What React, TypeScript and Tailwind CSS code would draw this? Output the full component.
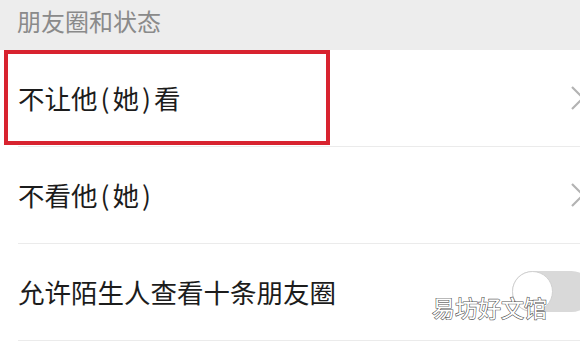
const font = "font-['Noto_Sans_CJK_SC','Noto_Sans',sans-serif]";

function Chevron() {
  return (
    <svg width="8" height="24" viewBox="0 0 8 24" className="shrink-0 overflow-visible">
      <path d="M0 1 L11 12 L0 23" fill="none" stroke="#b3b3b3" strokeWidth="2.2" />
    </svg>
  );
}

// 括号略宽一些，贴近原图字体
function Label({ text }: { text: string }) {
  const parts = text.split(/([()])/);
  return (
    <span className="text-[26.5px] text-[#1c1c1c] leading-none">
      {parts.map((p, i) =>
        p === "(" || p === ")" ? (
          <span key={i} className="mx-[3px]">
            {p}
          </span>
        ) : (
          p
        )
      )}
    </span>
  );
}

function Row({ label, right }: { label: string; right: React.ReactNode }) {
  return (
    <div className="h-[97px] pl-[18px] flex">
      <div className="flex-1 flex items-center justify-between border-b border-[#ebebeb]">
        <Label text={label} />
        {right}
      </div>
    </div>
  );
}

export default function App() {
  return (
    <div className={`relative w-[580px] h-[342px] overflow-hidden bg-white ${font}`}>
      {/* 区块标题 */}
      <div className="h-[50px] bg-[#ededed] flex items-center pl-[17px] pb-[8px]">
        <span className="text-[24px] text-[#8a8a8a] leading-none">朋友圈和状态</span>
      </div>

      {/* 列表 */}
      <div className="flex flex-col">
        <Row label="不让他(她)看" right={<Chevron />} />
        <Row label="不看他(她)" right={<Chevron />} />
        <Row
          label="允许陌生人查看十条朋友圈"
          right={
            <div className="shrink-0 w-[80px] h-[41px] mr-[-12px] mt-[-2px] rounded-full bg-[#d9d9d9] flex items-center">
              <div className="w-[41px] h-[41px] rounded-full bg-white border border-[#d0d0d0]" />
            </div>
          }
        />
      </div>

      {/* 红框标注 */}
      <div className="absolute left-[4px] top-[50px] w-[326px] h-[95px] border-[4px] border-[#d8232f]" />

      {/* 水印 */}
      <div className="absolute left-[432px] top-[296px] text-[23px] leading-none text-white [-webkit-text-stroke:1.2px_#555] [paint-order:stroke_fill]">
        易坊好文馆
      </div>
    </div>
  );
}
